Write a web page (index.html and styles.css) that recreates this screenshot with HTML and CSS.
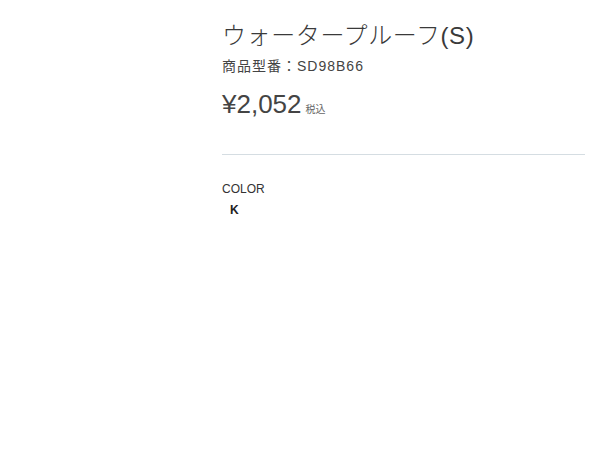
FILE: index.html
```html
<!DOCTYPE html>
<html lang="ja">
<head>
<meta charset="utf-8">
<link rel="stylesheet" href="styles.css">
</head>
<body>
<div class="product">
  <h1 class="title">ウォータープルーフ(S)</h1>
  <p class="model">商品型番：SD98B66</p>
  <p class="price"><span class="amount">¥2,052</span><span class="tax">税込</span></p>
  <hr class="divider">
  <div class="option">
    <div class="option-label">COLOR</div>
    <div class="option-value">K</div>
  </div>
</div>
</body>
</html>
```
FILE: styles.css
```css
html, body {
  margin: 0;
  padding: 0;
  background: #fff;
}
body {
  font-family: "Liberation Sans", "Noto Sans CJK JP", sans-serif;
  color: #333;
}
.product {
  padding: 20px 15px 0 222px;
}
.title {
  margin: 0;
  font-size: 24px;
  font-weight: 300;
  line-height: 32px;
  letter-spacing: 0.6px;
  color: #3a3a3a;
}
.model {
  margin: 4px 0 0;
  font-size: 14px;
  line-height: 20px;
  letter-spacing: 1px;
  color: #444;
}
.price {
  margin: 12px 0 0;
  line-height: 32px;
}
.amount {
  font-size: 26px;
  color: #444;
}
.tax {
  font-size: 10px;
  margin-left: 4px;
  color: #666;
}
.divider {
  margin: 28px 0 0;
  border: 0;
  border-top: 1px solid #d5dde2;
  height: 0;
}
.option {
  margin-top: 26px;
}
.option-label {
  font-size: 12px;
  line-height: 16px;
  color: #333;
}
.option-value {
  font-size: 12px;
  font-weight: bold;
  line-height: 16px;
  padding-left: 8px;
  margin-top: 5px;
  color: #222;
}
```
